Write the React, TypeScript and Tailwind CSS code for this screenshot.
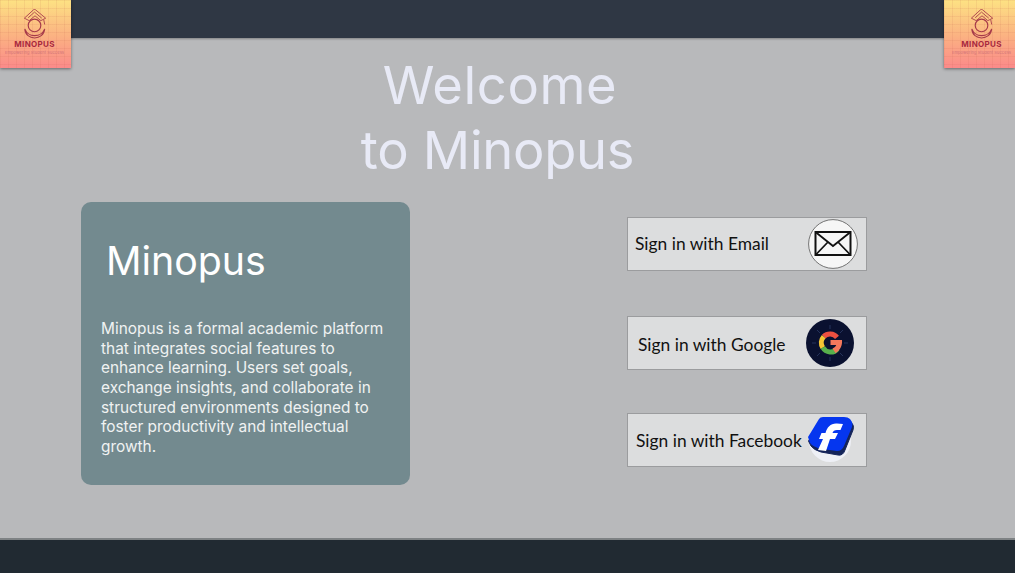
import React from "react";

function Logo({ side }: { side: "l" | "r" }) {
  return (
    <div className={`absolute top-0 z-10 flex h-[68px] w-[71px] flex-col items-center bg-[linear-gradient(#fde283,#fbb082_55%,#fb8a8a)] shadow-[0_1px_3px_rgba(0,0,0,0.45)] ${side === "l" ? "left-0 pr-[2px]" : "right-0 pl-[4px]"}`}>
      <div className="absolute inset-0 bg-[linear-gradient(rgba(190,90,70,0.1)_1px,transparent_1px),linear-gradient(90deg,rgba(190,90,70,0.1)_1px,transparent_1px)] bg-[size:8px_8px]" />
      <svg viewBox="0 0 24 32" className="relative mt-[9px] h-[31px] w-[24px]" fill="none" stroke="#a63a4a" strokeWidth="0.9">
        <path d="M1 9.5 L10.5 0.8 C11 0.4 12 0.4 12.5 0.8 L23 9.5 L18 12 L12 7 L6 12 Z" />
        <path d="M5 9 L11.5 3.2 L19 9.5" />
        <path d="M21 11 L22 16" />
        <circle cx="11.5" cy="17" r="6.5" strokeWidth="1.2" />
        <path d="M1.5 20.5 C2 33 21 33 22 20.5 C20 25.5 16 27.5 11.5 27.5 C7 27.5 3.5 25.5 1.5 20.5 Z" strokeWidth="1.1" />
      </svg>
      <div className="relative font-['Inter',sans-serif] text-[8px] leading-[9px] font-bold tracking-[0.3px] text-[#a8283f]">MINOPUS</div>
      <div className="relative mt-[2px] whitespace-nowrap font-['Inter',sans-serif] text-[4px] leading-[4px] tracking-[0.1px] text-[#cf7078]">Empowering Student Success</div>
    </div>
  );
}

function SignIn({ label, cls, textCls, icon }: { label: string; cls: string; textCls: string; icon: React.ReactNode }) {
  return (
    <button className={`flex h-[54px] w-[240px] items-center justify-between border border-[#9b9c9e] bg-[#dcddde] font-['Lato',sans-serif] text-[17.4px] text-[#111] ${cls}`}>
      <span className={`whitespace-nowrap ${textCls}`}>{label}</span>
      {icon}
    </button>
  );
}

export default function App() {
  return (
    <div className="relative flex h-[573px] w-[1015px] flex-col overflow-hidden bg-[#b8b9bb] font-['Inter',sans-serif]">
      <Logo side="l" />
      <Logo side="r" />
      <header className="h-[38px] shrink-0 bg-[#2f3744] shadow-[0_1px_2px_rgba(0,0,0,0.3)]" />
      <main className="flex flex-1 flex-col">
        <h1 className="mt-[15px] flex flex-col items-center pr-[20px] text-[52.5px] leading-[65px] font-normal text-[#e8eaf6]">
          <span className="pl-[5px] tracking-[0.6px]">Welcome</span>
          <span className="-tracking-[0.3px]">to Minopus</span>
        </h1>
        <div className="mt-[19px] flex items-start pl-[81px]">
          <section className="h-[283px] w-[329px] rounded-[10px] bg-[#738a8f] pt-[34px] pl-[20px] text-white">
            <h2 className="pl-[5px] text-[39.3px] leading-[50px] font-normal">Minopus</h2>
            <p className="mt-[33px] w-[295px] text-[15.4px] leading-[19.65px] font-normal text-[#f0f2f2]">
              Minopus is a formal academic platform that integrates social features to enhance learning. Users set goals, exchange insights, and collaborate in structured environments designed to foster productivity and intellectual growth.
            </p>
          </section>
          <div className="mt-[15px] ml-[217px] flex flex-col">
            <SignIn
              label="Sign in with Email"
              cls="pl-[7px] pr-[8px]"
              textCls=""
              icon={
                <svg viewBox="0 0 50 50" className="h-[50px] w-[50px]">
                  <circle cx="25" cy="25" r="24.4" fill="#f6f6f6" stroke="#555" strokeWidth="0.8" />
                  <rect x="7.5" y="13" width="35" height="23" fill="#f6f6f6" stroke="#111" strokeWidth="2" />
                  <path d="M7.5 13 L25 27 L42.5 13 M7.5 36 L20 23 M42.5 36 L30 23" fill="none" stroke="#111" strokeWidth="1.8" />
                </svg>
              }
            />
            <SignIn
              label="Sign in with Google"
              cls="mt-[45px] pl-[10px] pr-[12px]"
              textCls="pt-[4px]"
              icon={
                <svg viewBox="0 0 48 48" className="h-[48px] w-[48px]">
                  <circle cx="24" cy="24" r="24" fill="#0a1130" />
                  <path d="M24 6 V10 M24 38 V42 M6 24 H10 M38 24 H42 M11 11 L14 14 M37 11 L34 14 M11 37 L14 34 M37 37 L34 34" stroke="#24325a" strokeWidth="1" />
                  <path d="M17.7 17.6 A9 9 0 0 1 31 18.3" fill="none" stroke="#ee5040" strokeWidth="5" />
                  <path d="M17.7 17.6 A9 9 0 0 0 16.8 28.6" fill="none" stroke="#f4c534" strokeWidth="5" />
                  <path d="M16.8 28.6 A9 9 0 0 0 31.5 29.8" fill="none" stroke="#58b04c" strokeWidth="5" />
                  <path d="M24.5 21 H36 C36.5 27 34 31.5 29.5 34 L26.5 29.5 C28.5 28.5 29.8 27.5 30.2 26 H24.5 Z" fill="#f4785c" />
                </svg>
              }
            />
            <SignIn
              label="Sign in with Facebook"
              cls="mt-[43px] pl-[8px] pr-[11px]"
              textCls="pt-[2px]"
              icon={
                <svg viewBox="0 0 48 48" className="-mt-[1px] h-[48px] w-[48px] shrink-0">
                  <circle cx="23" cy="25" r="21" fill="#eef0f6" />
                  <path d="M1.5 25 L13 6 Q14 4 17 4 L38 4 Q42 4 44 6 L46 9 Q47 11 46 14 L38 34 Q36 40 31 39 L14 36 Q7 34 4 30 Z" fill="#14245a" stroke="#14245a" strokeLinejoin="round" />
                  <path d="M1 21 L12 3 Q13 1 16 1 L37 1 Q41 1 43 3 L45 6 Q46 8 45 11 L37 30 Q35 35 30 35 L15 33 Q6 31 3 27 Z" fill="#0536ef" />
                  <path d="M11 34 L16 23 H12 L14.5 17 H18.5 C20 11 24 7 30 7.5 L36 8 L33.5 14 H30 C27.5 14 26 15 25.5 17 H31 L28 23 H23 L19 35 Z" fill="#fff" />
                </svg>
              }
            />
          </div>
        </div>
      </main>
      <footer className="h-[35px] shrink-0 border-t-2 border-[#7e8284] bg-[#212a32]" />
    </div>
  );
}
